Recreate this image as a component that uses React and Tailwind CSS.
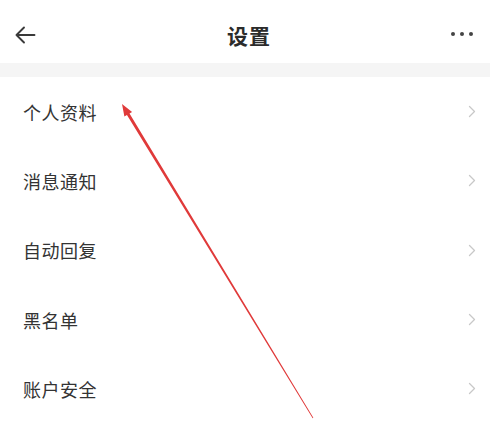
import React from "react";

const rows = ["个人资料", "消息通知", "自动回复", "黑名单", "账户安全"];

function Chevron() {
  return (
    <svg width="8" height="13" viewBox="0 0 8 13" fill="none">
      <path d="M1.5 1.5 L6.5 6.5 L1.5 11.5" stroke="#c8c8c8" strokeWidth="1.3" strokeLinecap="round" strokeLinejoin="round" />
    </svg>
  );
}

export default function App() {
  return (
    <div
      className="relative w-[490px] h-[428px] bg-white overflow-hidden"
      style={{ fontFamily: '"Noto Sans CJK SC", "Noto Sans", sans-serif' }}
    >
      <div className="h-[63px] flex items-center px-[14px]">
        <div className="w-[60px] flex items-center mt-[6px]">
          <svg width="22" height="20" viewBox="0 0 22 20" fill="none">
            <path d="M20.5 10 H2.5 M10 2.5 L2.5 10 L10 17.5" stroke="#3a3a3a" strokeWidth="1.9" strokeLinecap="round" strokeLinejoin="round" />
          </svg>
        </div>
        <div className="flex-1 text-center pl-[8px] text-[21px] font-bold text-[#2b2b2b] mt-[9px] tracking-[1px]">设置</div>
        <div className="w-[60px] flex items-center justify-end gap-[5px] pr-[3px] mt-[5px]">
          <span className="w-[4px] h-[4px] rounded-full bg-[#444]" />
          <span className="w-[4px] h-[4px] rounded-full bg-[#444]" />
          <span className="w-[4px] h-[4px] rounded-full bg-[#444]" />
        </div>
      </div>
      <div className="h-[14px] bg-[#f5f5f5]" />
      <div className="flex flex-col">
        {rows.map((r) => (
          <div key={r} className="h-[69.3px] flex items-center justify-between pl-[23px] pr-[14px]">
            <span className="text-[18px] text-[#333] tracking-[0.5px] mt-[1px]">{r}</span>
            <Chevron />
          </div>
        ))}
      </div>
      <svg
        className="absolute left-0 top-0 pointer-events-none"
        width="490"
        height="428"
        viewBox="0 0 490 428"
      >
        <polygon
          points="122,104 132.08,111.91 129.52,113.47 313.34,417.79 312.66,418.21 126.96,115.03 124.40,116.59"
          fill="#e03a3a"
        />
      </svg>
    </div>
  );
}
